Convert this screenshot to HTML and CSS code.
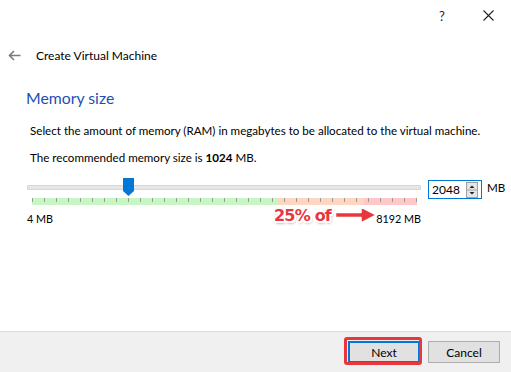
FILE: index.html
```html
<!DOCTYPE html>
<html lang="en">
<head>
    <meta charset="UTF-8">
    <title>Create Virtual Machine</title>
    <link rel="stylesheet" href="styles.css">
</head>
<body>
    <div class="window">
        <div class="titlebar">
            <span class="title-btn">?</span>
            <span class="title-btn">
                <svg width="11" height="11" viewBox="0 0 11 11"><path d="M0.5 0.5 L10.5 10.5 M10.5 0.5 L0.5 10.5" stroke="#222" stroke-width="1.1" fill="none"/></svg>
            </span>
        </div>

        <div class="header">
            <svg class="back" width="13" height="11" viewBox="0 0 13 11"><path d="M12.5 5.5 H1.5 M6 1 L1.5 5.5 L6 10" stroke="#7a7a7a" stroke-width="1.6" fill="none"/></svg>
            <span class="header-title">Create Virtual Machine</span>
        </div>

        <div class="page">
            <h2>Memory size</h2>
            <p class="desc">Select the amount of memory (RAM) in megabytes to be allocated to the virtual machine.</p>
            <p class="desc">The recommended memory size is <b>1024</b> MB.</p>

            <div class="memory-row">
                <div class="slider">
                    <div class="track"></div>
                    <div class="handle"></div>
                    <div class="band"></div>
                    <div class="scale">
                        <span>4 MB</span>
                        <span>8192 MB</span>
                    </div>
                </div>
                <div class="spinbox">
                    <span class="spin-value">2048</span>
                    <span class="spin-arrows">
                        <svg width="12" height="16" viewBox="0 0 12 16"><rect x="0.5" y="0.5" width="11" height="15" fill="#e6e6e6" stroke="#a0a0a0"/><path d="M0.5 8 H11.5" stroke="#a0a0a0"/><path d="M3.5 6 L6 3.5 L8.5 6 Z M3.5 10 L6 12.5 L8.5 10 Z" fill="#222"/></svg>
                    </span>
                </div>
                <span class="unit">MB</span>
            </div>
        </div>

        <div class="note">
            <span class="note-text">25% of</span>
            <svg class="note-arrow" width="44" height="20" viewBox="0 0 44 20"><path d="M1.5 7.5 H27 V2 L42.5 10 L27 18 V12.5 H1.5 Z" fill="#e8373c" stroke="#fff" stroke-width="1.5" stroke-linejoin="round"/></svg>
        </div>

        <div class="footer">
            <button class="btn btn-default">Next</button>
            <button class="btn">Cancel</button>
            <div class="highlight"></div>
        </div>
    </div>
</body>
</html>
```

FILE: styles.css
```css
body {
    margin: 0;
    background: #fff;
    font-family: "Lato", "Liberation Sans", sans-serif;
    font-size: 11.6px;
    color: #000;
}
.window {
    position: relative;
    width: 511px;
    height: 372px;
    display: flex;
    flex-direction: column;
    overflow: hidden;
}
.titlebar {
    height: 31px;
    display: flex;
    justify-content: flex-end;
}
.title-btn {
    width: 46px;
    display: flex;
    align-items: center;
    justify-content: center;
    font-size: 13px;
    color: #222;
}
.header {
    height: 22px;
    margin-top: 13px;
    display: flex;
    align-items: center;
    padding-left: 8px;
}
.back {
    margin-right: 15px;
}
.header-title {
    font-size: 12px;
}
.page {
    flex: 1;
    padding: 0 0 0 30px;
}
h2 {
    margin: 22px 0 0 -4px;
    font-size: 15.8px;
    font-weight: normal;
    line-height: 20px;
    color: #1d4fb5;
}
.desc {
    margin: 0;
    line-height: 16px;
    white-space: nowrap;
}
h2 + .desc {
    margin-top: 15px;
}
.desc + .desc {
    margin-top: 11px;
}
.desc b {
    font-weight: bold;
}
.memory-row {
    display: flex;
    align-items: flex-start;
    margin-top: 12px;
    margin-left: -3px;
}
.slider {
    position: relative;
    width: 394px;
    padding-top: 7px;
}
.track {
    height: 3px;
    background: #e7e7e7;
    border: 1px solid #d6d6d6;
    border-radius: 1px;
}
.handle {
    position: absolute;
    left: 96px;
    top: 0;
    width: 11px;
    height: 18px;
    background: #0078d7;
    clip-path: polygon(0 0, 100% 0, 100% 72%, 50% 100%, 0 72%);
}
.band {
    margin: 8px 4px 0 5px;
    height: 7px;
    background:
        repeating-linear-gradient(90deg, #9a9a9a 0 1px, transparent 1px 12px) top left / 100% 4px no-repeat,
        linear-gradient(90deg, #c6f7c3 0 246px, #fdd7c2 246px 332px, #ffc7c7 332px);
}
.scale {
    display: flex;
    justify-content: space-between;
    margin-top: 7px;
    font-size: 10.8px;
    line-height: 14px;
}
.spinbox {
    margin-left: 7px;
    width: 54px;
    height: 19px;
    box-sizing: border-box;
    border: 1px solid #0078d7;
    display: flex;
    align-items: center;
    justify-content: space-between;
    padding: 0 3px 0 3px;
    margin-top: 2px;
}
.spin-value {
    font-size: 12px;
}
.spin-arrows {
    display: flex;
}
.unit {
    margin-left: 5px;
    margin-top: 3px;
    font-size: 11.6px;
}
.note {
    position: absolute;
    left: 274px;
    top: 205px;
    display: flex;
    align-items: center;
    gap: 3px;
}
.note-text {
    font-family: "DejaVu Sans", sans-serif;
    font-weight: bold;
    font-size: 16px;
    color: #e8373c;
    letter-spacing: -0.8px;
    text-shadow:
        -2px 0 0 #fff, 2px 0 0 #fff, 0 -2px 0 #fff, 0 2px 0 #fff,
        -1.5px -1.5px 0 #fff, 1.5px -1.5px 0 #fff, -1.5px 1.5px 0 #fff, 1.5px 1.5px 0 #fff,
        1px 2px 3px rgba(0, 0, 0, 0.5);
}
.footer {
    position: relative;
    height: 41px;
    box-sizing: border-box;
    background: #f0f0f0;
    border-top: 1px solid #dcdcdc;
    display: flex;
    justify-content: flex-end;
    align-items: flex-start;
    gap: 8px;
    padding: 9px 11px 0 0;
}
.btn {
    width: 72px;
    height: 22px;
    background: #e1e1e1;
    border: 1px solid #adadad;
    font-family: "Lato", "Liberation Sans", sans-serif;
    font-size: 12px;
    padding: 0;
    color: #000;
}
.btn-default {
    border: 2px solid #0078d7;
}
.highlight {
    position: absolute;
    left: 344px;
    top: 5px;
    width: 72px;
    height: 22px;
    border: 3px solid #e8373c;
    border-radius: 3px;
}
```
